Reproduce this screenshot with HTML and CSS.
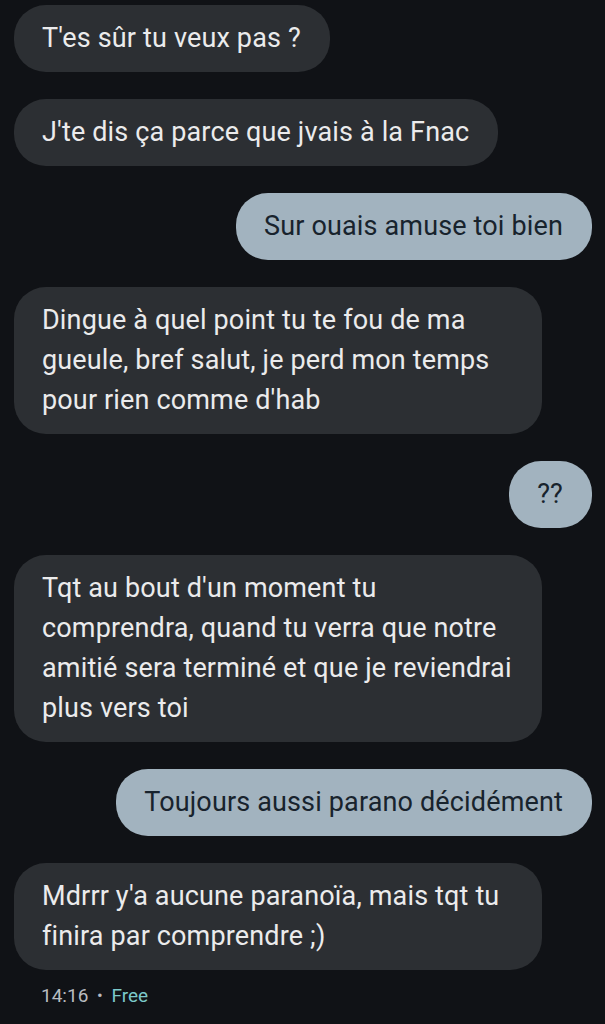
FILE: index.html
```html
<!DOCTYPE html>
<html lang="fr">
<head>
    <meta charset="UTF-8">
    <meta name="viewport" content="width=device-width, initial-scale=1.0">
    <title>Messages</title>
    <link rel="stylesheet" href="styles.css">
</head>
<body>
    <div class="thread">
        <div class="msg in">T'es sûr tu veux pas ?</div>
        <div class="msg in">J'te dis ça parce que jvais à la Fnac</div>
        <div class="msg out">Sur ouais amuse toi bien</div>
        <div class="msg in">Dingue à quel point tu te fou de ma gueule, bref salut, je perd mon temps pour rien comme d'hab</div>
        <div class="msg out">??</div>
        <div class="msg in">Tqt au bout d'un moment tu comprendra, quand tu verra que notre amitié sera terminé et que je reviendrai plus vers toi</div>
        <div class="msg out">Toujours aussi parano décidément</div>
        <div class="msg in">Mdrrr y'a aucune paranoïa, mais tqt tu finira par comprendre ;)</div>
        <div class="meta">14:16 <span class="dot">•</span> <span class="sim">Free</span></div>
    </div>
</body>
</html>
```

FILE: styles.css
```css
body {
    margin: 0;
    background: #101216;
    font-family: Roboto, "Noto Sans", sans-serif;
}

.thread {
    display: flex;
    flex-direction: column;
    gap: 27px;
    padding: 5px 13px 0 14px;
}

.msg {
    box-sizing: border-box;
    max-width: 528px;
    padding: 13px 29px 14px 28px;
    font-size: 27px;
    line-height: 40px;
    letter-spacing: 0.15px;
    border-radius: 32px;
}

.in {
    align-self: flex-start;
    background: #2c2f33;
    color: #ebebec;
}

.out {
    align-self: flex-end;
    background: #a2b3bf;
    color: #18232d;
}

.meta {
    margin-top: -13px;
    padding-left: 27px;
    font-size: 19px;
    color: #b9bcc0;
}

.dot {
    font-size: 17px;
    margin: 0 4px;
    vertical-align: 1px;
}

.sim {
    color: #7cc9ca;
}
```
